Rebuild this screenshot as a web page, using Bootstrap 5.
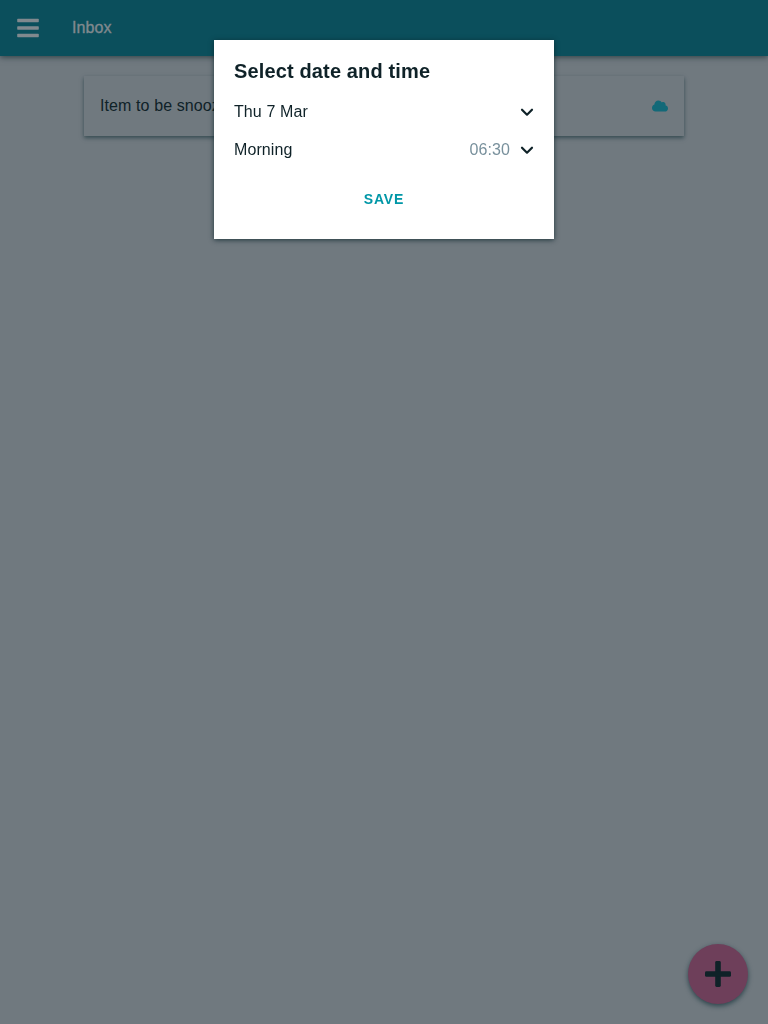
<!DOCTYPE html>
<html lang="en">
<head>
<meta charset="utf-8">
<meta name="viewport" content="width=device-width, initial-scale=1">
<title>Inbox</title>
<link href="https://cdn.jsdelivr.net/npm/bootstrap@5.3.0/dist/css/bootstrap.min.css" rel="stylesheet">
<style>
body{background:#70797f;color:#0f2228;font:16px/24px "Liberation Sans",Arial,sans-serif;letter-spacing:.1px;height:100vh;overflow:hidden}
.topbar{height:56px;background:#0b4f5c;color:#80898e;box-shadow:0 1px 6px rgba(16,36,43,.7);padding:0 16px}
.topbar h1{font-size:16px;line-height:24px;-webkit-text-stroke:.35px currentColor;margin-left:32px}
.item{width:600px;height:60px;margin-top:20px;padding:0 16px;background:#70797f;box-shadow:0 2px 4px rgba(16,46,54,.6)}
.fab{right:20px;bottom:20px;width:60px;height:60px;background:#6e3f5a;color:#0f2228;box-shadow:0 2px 5px rgba(16,46,54,.7)}
.picker{top:40px;left:50%;width:340px;height:199px;margin-left:-170px;padding:19px 20px 0;background:#fff;box-shadow:0 1px 5px rgba(10,35,42,.8)}
.picker h2{font-size:20px;line-height:24px;letter-spacing:.14px;margin-bottom:10px}
.choice{height:38px}
.hour{color:#78909c;margin-right:10px}
.save{color:#0097a7;font-size:14px;font-weight:700;line-height:20px;letter-spacing:.8px;margin-top:20px}
</style>
</head>
<body>
<header class="topbar d-flex align-items-center">
  <button class="btn p-0 border-0 d-flex" aria-label="Menu">
    <svg width="24" height="24" fill="#80898e"><rect x="1.200" y="2.800" width="21.600" height="3.400" rx=".6"/><rect x="1.200" y="10.300" width="21.600" height="3.400" rx=".6"/><rect x="1.200" y="17.800" width="21.600" height="3.400" rx=".6"/></svg>
  </button>
  <h1 class="mb-0 fw-normal">Inbox</h1>
</header>
<main>
  <div class="item mx-auto d-flex align-items-center justify-content-between">
    <span>Item to be snoozed</span>
    <svg width="16" height="16" viewBox="0 0 640 512" fill="#136978"><path d="M537.600 226.600c4.100-10.700 6.400-22.400 6.400-34.600 0-53-43-96-96-96-19.700 0-38.100 6-53.300 16.200C367 64.200 315.300 32 256 32c-88.400 0-160 71.600-160 160 0 2.700.1 5.400.2 8.100C40.200 219.800 0 273.200 0 336c0 79.500 64.500 144 144 144h368c70.700 0 128-57.300 128-128 0-61.900-44-113.600-102.400-125.400z"/></svg>
  </div>
</main>
<button class="fab btn border-0 rounded-circle p-0 position-fixed d-flex align-items-center justify-content-center" aria-label="Add">
  <svg width="26" height="26" fill="#0f2228"><rect x="10.200" width="5.600" height="26" rx="1.400"/><rect y="10.200" width="26" height="5.600" rx="1.400"/></svg>
</button>
<section class="picker position-fixed" role="dialog" aria-labelledby="picker-title">
  <h2 id="picker-title" class="fw-bold">Select date and time</h2>
  <div class="choice d-flex align-items-center">
    <span class="me-auto">Thu 7 Mar</span>
    <svg width="14" height="14" fill="none" stroke="#0f2228" stroke-width="2.200" stroke-linecap="round" stroke-linejoin="round"><path d="M2 4.700l5 5 5-5"/></svg>
  </div>
  <div class="choice d-flex align-items-center">
    <span class="me-auto">Morning</span><span class="hour">06:30</span>
    <svg width="14" height="14" fill="none" stroke="#0f2228" stroke-width="2.200" stroke-linecap="round" stroke-linejoin="round"><path d="M2 4.700l5 5 5-5"/></svg>
  </div>
  <div class="text-center"><button class="save btn border-0 p-0">SAVE</button></div>
</section>
<script src="https://cdn.jsdelivr.net/npm/bootstrap@5.3.0/dist/js/bootstrap.bundle.min.js"></script>
</body>
</html>
